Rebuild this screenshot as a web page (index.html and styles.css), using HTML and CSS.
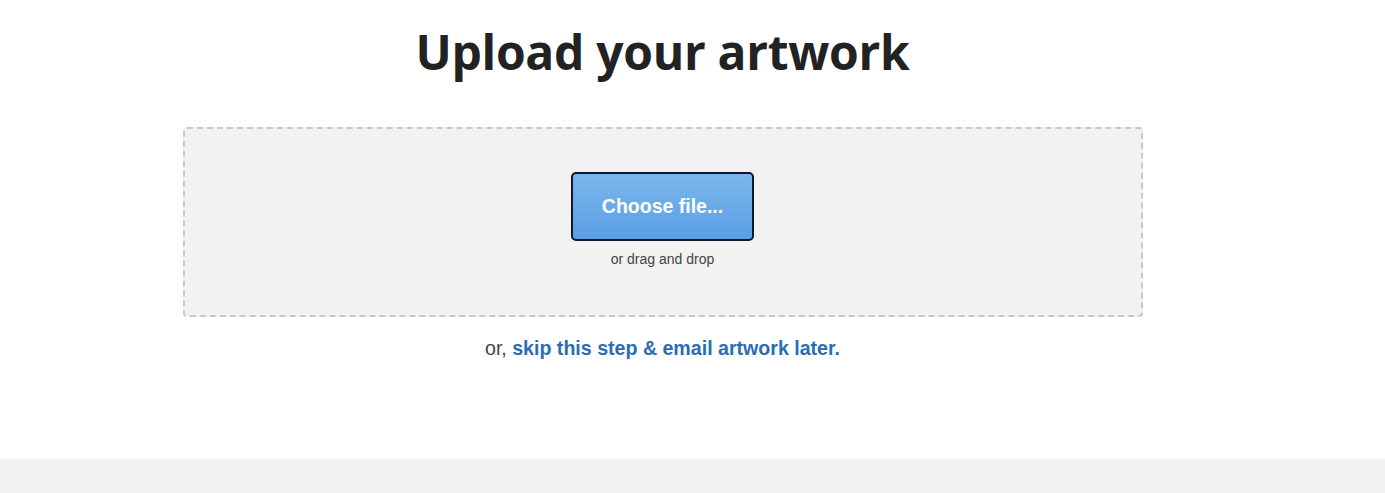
FILE: index.html
```html
<!DOCTYPE html>
<html>
<head>
<meta charset="utf-8">
<link rel="stylesheet" href="styles.css">
</head>
<body>
<main class="page">
  <h1 class="title">Upload your artwork</h1>
  <div class="dropzone">
    <button class="choose-btn">Choose file...</button>
    <div class="drag-hint">or drag and drop</div>
  </div>
  <p class="skip">or, <a href="#" class="skip-link">skip this step &amp; email artwork later.</a></p>
</main>
<footer class="footer"></footer>
</body>
</html>
```

FILE: styles.css
```css
html, body {
  margin: 0;
  padding: 0;
  background: #fff;
}
body {
  font-family: "Liberation Sans", Arial, sans-serif;
  color: #222;
  display: flex;
  flex-direction: column;
  min-height: 493px;
}
.page {
  padding-right: 60px;
  display: flex;
  flex-direction: column;
  align-items: center;
  height: 459px;
  box-sizing: border-box;
}
.title {
  font-family: "Open Sans", "Noto Sans", sans-serif;
  font-weight: 700;
  font-size: 48px;
  line-height: 60px;
  margin: 22px 0 0;
  color: #222;
  letter-spacing: -0.3px;
}
.dropzone {
  margin-top: 45px;
  width: 960px;
  height: 190px;
  box-sizing: border-box;
  border: 2px dashed #c8c8c8;
  border-radius: 4px;
  background: #f2f2f2;
  display: flex;
  flex-direction: column;
  align-items: center;
  padding-top: 43px;
}
.choose-btn {
  width: 183px;
  height: 69px;
  box-sizing: border-box;
  border: 2px solid #0e1a28;
  border-radius: 5px;
  background: linear-gradient(#7ab6ec, #5a9fe3);
  color: #fff;
  font-family: "Liberation Sans", Arial, sans-serif;
  font-weight: 700;
  font-size: 19.5px;
  padding: 0;
  cursor: pointer;
}
.drag-hint {
  margin-top: 10px;
  font-size: 14px;
  color: #444;
  line-height: 17px;
}
.skip {
  margin: 19px 0 0;
  font-size: 19.6px;
  line-height: 24px;
  color: #444;
}
.skip-link {
  color: #2a6db0;
  font-weight: 700;
  text-decoration: none;
}
.footer {
  flex: 1;
  height: 34px;
  background: #f1f1f1;
}
```
